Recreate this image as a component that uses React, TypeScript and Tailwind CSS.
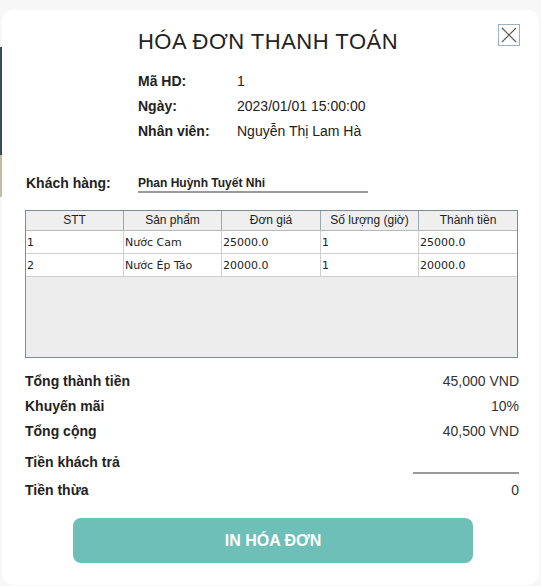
import React from "react";

const rows = [
  ["1", "Nước Cam", "25000.0", "1", "25000.0"],
  ["2", "Nước Ép Táo", "20000.0", "1", "20000.0"],
];
const headers = ["STT", "Sản phẩm", "Đơn giá", "Số lượng (giờ)", "Thành tiền"];
const widths = ["w-[98px]", "w-[98px]", "w-[99px]", "w-[98px]", "w-[98px]"];

export default function App() {
  return (
    <div className="relative w-[541px] h-[586px] bg-[#f7f7f7] overflow-hidden" style={{ fontFamily: '"Liberation Sans", Arial, sans-serif' }}>
      <div className="absolute left-0 top-[47px] w-[2px] h-[108px] bg-[#3b4a59]" />
      <div className="absolute left-0 top-[155px] w-[2px] h-[42px] bg-[#c9b9a4]" />
      <div className="relative ml-[2px] mt-[10px] w-[537px] h-[575px] bg-white rounded-xl pl-[23px] pr-[20px] pt-[19px]">
        {/* close */}
        <div className="absolute right-[19px] top-[14px] w-[22px] h-[22px] border border-[#9fb1c6] flex items-center justify-center">
          <svg width="18" height="18" viewBox="0 0 18 18">
            <path d="M2 2 L16 16 M16 2 L2 16" stroke="#555" strokeWidth="1.1" />
          </svg>
        </div>
        <div className="mr-[8px] text-center text-[22px] leading-[26px] text-[#222] tracking-[0.5px]">HÓA ĐƠN THANH TOÁN</div>
        <div className="mt-[14px] pl-[113px] text-[14px] leading-[25px] text-[#222]">
          <div className="flex"><span className="w-[99px] font-bold">Mã HD:</span><span>1</span></div>
          <div className="flex"><span className="w-[99px] font-bold">Ngày:</span><span>2023/01/01 15:00:00</span></div>
          <div className="flex"><span className="w-[99px] font-bold">Nhân viên:</span><span>Nguyễn Thị Lam Hà</span></div>
        </div>
        <div className="mt-[29px] flex items-end">
          <span className="w-[113px] pl-[1px] font-bold text-[14px] leading-[20px] text-[#222]">Khách hàng:</span>
          <div className="w-[230px] border-b-2 border-[#9a9a9a] text-[12px] leading-[15px] font-bold text-[#222]">Phan Huỳnh Tuyết Nhi</div>
        </div>
        {/* table */}
        <div className="mt-[17px] w-[493px] h-[148px] border border-[#7d8a97] bg-[#ededed] flex flex-col">
          <div className="flex h-[20px] bg-[#efefef] border-b border-[#b8b8b8]">
            {headers.map((h, i) => (
              <div key={i} className={`${widths[i]} ${i < 4 ? "border-r border-[#9aa6b2]" : ""} text-center text-[12px] leading-[19px] text-[#222]`}>{h}</div>
            ))}
          </div>
          {rows.map((r, ri) => (
            <div key={ri} className="flex h-[23px] bg-white border-b border-[#cfcfcf]">
              {r.map((c, i) => (
                <div key={i} className={`${widths[i]} ${i < 4 ? "border-r border-[#cfcfcf]" : ""} pl-[1px] text-[11px] leading-[24px] text-[#222]`} style={{ fontFamily: '"DejaVu Sans", Verdana, sans-serif' }}>{c}</div>
              ))}
            </div>
          ))}
        </div>
        {/* summary */}
        <div className="mt-[11px] text-[14px] leading-[25px] text-[#222]">
          <div className="flex justify-between"><span className="font-bold">Tổng thành tiền</span><span className="text-[#333]">45,000 VND</span></div>
          <div className="flex justify-between"><span className="font-bold">Khuyến mãi</span><span className="text-[#333]">10%</span></div>
          <div className="flex justify-between"><span className="font-bold">Tổng cộng</span><span className="text-[#333]">40,500 VND</span></div>
          <div className="mt-[6px] flex justify-between items-start">
            <span className="font-bold">Tiền khách trả</span>
            <div className="w-[106px] h-[24px] border-b-2 border-[#9a9a9a]" />
          </div>
          <div className="mt-[3px] flex justify-between"><span className="font-bold">Tiền thừa</span><span className="text-[#333]">0</span></div>
        </div>
        <div className="mt-[15px] ml-[48px] w-[400px] h-[45px] rounded-lg bg-[#6dbfb7] flex items-center justify-center text-white font-bold text-[16px]">
          IN HÓA ĐƠN
        </div>
      </div>
    </div>
  );
}
